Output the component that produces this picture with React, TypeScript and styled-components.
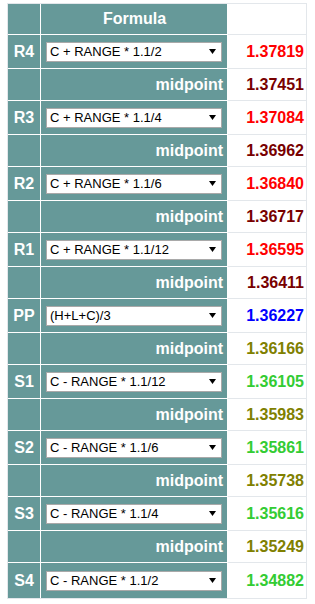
import { FC } from 'react';
import styled, { createGlobalStyle } from 'styled-components';

const TEAL = '#669999';
const LINE = '#e3e7eb';

const GlobalStyle = createGlobalStyle`
  html, body {
    margin: 0;
    padding: 0;
    background: #ffffff;
    font-family: "Liberation Sans", Arial, sans-serif;
  }
`;

const Page = styled.div`
  padding: 3px 0 0 7px;
`;

const Table = styled.div`
  display: flex;
  flex-direction: column;
  width: 298px;
  border: 1px solid ${LINE};
`;

const Row = styled.div<{ $height: number }>`
  display: grid;
  grid-template-columns: 33px 187px 78px;
  height: ${(p) => p.$height}px;
`;

const LabelCell = styled.div<{ $last?: boolean }>`
  display: flex;
  align-items: center;
  justify-content: center;
  background: ${TEAL};
  border-right: 1px solid #ffffff;
  border-bottom: ${(p) => (p.$last ? 'none' : '1px solid #ffffff')};
  color: #ffffff;
  font-size: 16px;
  font-weight: bold;
`;

const FormulaCell = styled.div<{ $align: 'left' | 'center' | 'right'; $last?: boolean }>`
  display: flex;
  align-items: center;
  justify-content: ${(p) =>
    p.$align === 'left' ? 'flex-start' : p.$align === 'right' ? 'flex-end' : 'center'};
  padding: 0 4px 0 5px;
  background: ${TEAL};
  border-right: 1px solid #ffffff;
  border-bottom: ${(p) => (p.$last ? 'none' : '1px solid #ffffff')};
  color: #ffffff;
  font-size: 16px;
  font-weight: bold;
`;

const ValueCell = styled.div<{ $color?: string; $last?: boolean }>`
  display: flex;
  align-items: center;
  justify-content: flex-end;
  padding-right: 2px;
  background: #ffffff;
  border-bottom: ${(p) => (p.$last ? 'none' : `1px solid ${LINE}`)};
  color: ${(p) => p.$color || '#000000'};
  font-size: 16px;
  font-weight: bold;
`;

const SelectWrap = styled.div`
  position: relative;
  width: 176px;
  height: 20px;
`;

const Select = styled.select`
  appearance: none;
  -webkit-appearance: none;
  box-sizing: border-box;
  width: 100%;
  height: 100%;
  margin: 0;
  padding: 0 18px 0 3px;
  border: 1px solid #a9a9a9;
  border-radius: 0;
  background: #ffffff;
  color: #000000;
  font-family: "Liberation Sans", Arial, sans-serif;
  font-size: 13px;
  outline: none;
`;

const Arrow = styled.svg`
  position: absolute;
  right: 6px;
  top: 7px;
  pointer-events: none;
`;

const FORMULAS = [
  'C + RANGE * 1.1/2',
  'C + RANGE * 1.1/4',
  'C + RANGE * 1.1/6',
  'C + RANGE * 1.1/12',
  '(H+L+C)/3',
  'C - RANGE * 1.1/12',
  'C - RANGE * 1.1/6',
  'C - RANGE * 1.1/4',
  'C - RANGE * 1.1/2',
];

interface Level {
  label: string;
  formula: string;
  value: string;
  color: string;
  mid?: string;
  midColor?: string;
}

const LEVELS: Level[] = [
  { label: 'R4', formula: FORMULAS[0], value: '1.37819', color: '#ff0000', mid: '1.37451', midColor: '#780000' },
  { label: 'R3', formula: FORMULAS[1], value: '1.37084', color: '#ff0000', mid: '1.36962', midColor: '#780000' },
  { label: 'R2', formula: FORMULAS[2], value: '1.36840', color: '#ff0000', mid: '1.36717', midColor: '#780000' },
  { label: 'R1', formula: FORMULAS[3], value: '1.36595', color: '#ff0000', mid: '1.36411', midColor: '#780000' },
  { label: 'PP', formula: FORMULAS[4], value: '1.36227', color: '#0000ff', mid: '1.36166', midColor: '#808000' },
  { label: 'S1', formula: FORMULAS[5], value: '1.36105', color: '#33cc33', mid: '1.35983', midColor: '#808000' },
  { label: 'S2', formula: FORMULAS[6], value: '1.35861', color: '#33cc33', mid: '1.35738', midColor: '#808000' },
  { label: 'S3', formula: FORMULAS[7], value: '1.35616', color: '#33cc33', mid: '1.35249', midColor: '#808000' },
  { label: 'S4', formula: FORMULAS[8], value: '1.34882', color: '#33cc33' },
];

const FormulaSelect: FC<{ value: string }> = ({ value }) => (
  <SelectWrap>
    <Select defaultValue={value}>
      {FORMULAS.map((f) => (
        <option key={f} value={f}>
          {f}
        </option>
      ))}
    </Select>
    <Arrow width="7" height="5" viewBox="0 0 7 5">
      <polygon points="0,0 7,0 3.5,5" fill="#000000" />
    </Arrow>
  </SelectWrap>
);

const App: FC = () => (
  <Page>
    <GlobalStyle />
    <Table>
      <Row $height={31}>
        <LabelCell />
        <FormulaCell $align="center">Formula</FormulaCell>
        <ValueCell />
      </Row>
      {LEVELS.map((lv, i) => {
        const last = i === LEVELS.length - 1;
        return [
          <Row key={lv.label} $height={last ? 35 : 34}>
            <LabelCell $last={last}>{lv.label}</LabelCell>
            <FormulaCell $align="left" $last={last}>
              <FormulaSelect value={lv.formula} />
            </FormulaCell>
            <ValueCell $color={lv.color} $last={last}>
              {lv.value}
            </ValueCell>
          </Row>,
          lv.mid ? (
            <Row key={`${lv.label}-mid`} $height={32}>
              <LabelCell />
              <FormulaCell $align="right">midpoint</FormulaCell>
              <ValueCell $color={lv.midColor}>{lv.mid}</ValueCell>
            </Row>
          ) : null,
        ];
      })}
    </Table>
  </Page>
);

export default App;
